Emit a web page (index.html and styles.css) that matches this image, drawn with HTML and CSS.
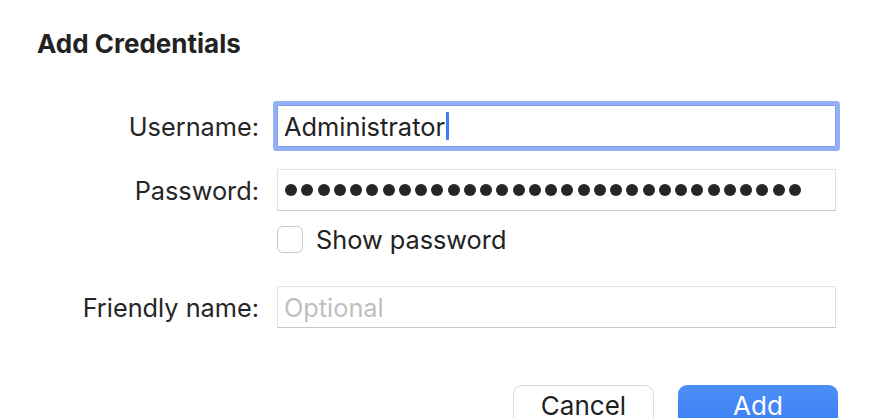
FILE: index.html
```html
<!DOCTYPE html>
<html>
<head>
<meta charset="utf-8">
<link rel="stylesheet" href="styles.css">
</head>
<body>
<div class="dialog">
  <h1 class="title">Add Credentials</h1>
  <div class="form">
    <div class="row row-user">
      <label class="label">Username:</label>
      <div class="field focused"><span class="value">Administrator</span><span class="caret"></span></div>
    </div>
    <div class="row row-pass">
      <label class="label">Password:</label>
      <div class="field dots">
        <span></span><span></span><span></span><span></span><span></span><span></span><span></span><span></span>
        <span></span><span></span><span></span><span></span><span></span><span></span><span></span><span></span>
        <span></span><span></span><span></span><span></span><span></span><span></span><span></span><span></span>
        <span></span><span></span><span></span><span></span><span></span><span></span><span></span><span></span>
      </div>
    </div>
    <div class="row row-check">
      <span class="label"></span>
      <label class="check"><span class="box"></span><span>Show password</span></label>
    </div>
    <div class="row row-friendly">
      <label class="label">Friendly name:</label>
      <div class="field"><span class="placeholder">Optional</span></div>
    </div>
  </div>
  <div class="actions">
    <button class="btn">Cancel</button>
    <button class="btn primary">Add</button>
  </div>
</div>
</body>
</html>
```
FILE: styles.css
```css
html, body {
  margin: 0;
  padding: 0;
  background: #ffffff;
}
body {
  font-family: "Inter", "Liberation Sans", sans-serif;
  color: #222222;
  overflow: hidden;
}
.dialog {
  width: 870px;
  height: 418px;
  padding: 28px 0 0 37px;
  box-sizing: border-box;
}
.title {
  margin: 0;
  font-size: 26px;
  line-height: 32px;
  font-weight: 700;
  color: #222222;
}
.form {
  margin-top: 45px;
}
.row {
  display: flex;
  align-items: center;
  gap: 18px;
}
.row-pass { margin-top: 22px; }
.row-check { margin-top: 13px; }
.row-friendly { margin-top: 31px; }
.label {
  width: 222px;
  text-align: right;
  font-size: 25.3px;
  color: #262626;
  flex: none;
}
.field {
  width: 559px;
  height: 42px;
  box-sizing: border-box;
  border: 1px solid #e2e2e2;
  border-bottom-color: #c6c6c6;
  display: flex;
  align-items: center;
  padding-left: 6px;
  font-size: 25.4px;
  background: #fff;
}
.field.focused {
  border: 1px solid #7c9ce9;
  box-shadow: 0 0 0 4px #93b1f4;
  border-radius: 1px;
}
.value {
  color: #222;
}
.caret {
  display: inline-block;
  width: 3px;
  height: 28px;
  background: #3b7cf5;
  border-radius: 1px;
  margin-left: 1px;
}
.placeholder {
  color: #bfbfbf;
  font-size: 25.3px;
}
.dots {
  gap: 4.25px;
  padding-left: 7px;
}
.dots span {
  width: 12px;
  height: 12px;
  border-radius: 50%;
  background: #262626;
  flex: none;
}
.check {
  display: flex;
  align-items: center;
  gap: 13px;
  font-size: 25.3px;
  color: #222;
}
.box {
  width: 26px;
  height: 27px;
  box-sizing: border-box;
  border: 1px solid #cbcbcb;
  border-radius: 6px;
  background: #fff;
}
.actions {
  display: flex;
  gap: 24px;
  margin-top: 57px;
  margin-left: 476px;
}
.btn {
  font-family: "Inter", "Liberation Sans", sans-serif;
  font-size: 26px;
  height: 44px;
  border-radius: 9px;
  border: 1px solid #dcdcdc;
  background: #fff;
  color: #222;
  padding: 0 0 4px 0;
}
.btn:first-child { width: 141px; }
.btn.primary {
  width: 160px;
  border: none;
  color: #fff;
  background: linear-gradient(#4e8ef7, #3a7ff5);
}
```
